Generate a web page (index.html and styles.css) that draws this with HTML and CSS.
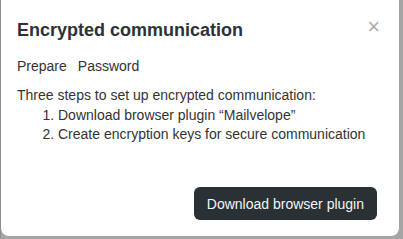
FILE: index.html
```html
<!DOCTYPE html>
<html>
<head>
<meta charset="utf-8">
<link rel="stylesheet" href="styles.css">
</head>
<body>
<div class="backdrop">
  <div class="modal">
    <div class="modal-header">
      <h2 class="title">Encrypted communication</h2>
      <span class="close">&times;</span>
    </div>
    <div class="tabs">
      <span class="tab">Prepare</span>
      <span class="tab">Password</span>
    </div>
    <div class="body">
      <p class="intro">Three steps to set up encrypted communication:</p>
      <ol class="steps">
        <li>Download browser plugin “Mailvelope”</li>
        <li>Create encryption keys for secure communication</li>
      </ol>
    </div>
    <div class="footer">
      <button class="btn">Download browser plugin</button>
    </div>
  </div>
</div>
</body>
</html>
```
FILE: styles.css
```css
html, body {
  margin: 0;
  padding: 0;
  width: 403px;
  height: 239px;
  overflow: hidden;
  background: #9a9a9a;
}
.backdrop {
  width: 403px;
  height: 239px;
  padding: 0 4px 3px 1px;
  box-sizing: border-box;
  display: flex;
  flex-direction: column;
  justify-content: flex-end;
  background: linear-gradient(to right, #8f8f8f 0, #8f8f8f 1px, #a5a5a5 1px);
}
.modal {
  height: 244px;
  flex-shrink: 0;
  background: #fff;
  border-radius: 8px;
  display: flex;
  flex-direction: column;
  font-family: "Liberation Sans", Arial, sans-serif;
  color: #333;
  box-sizing: border-box;
  padding: 0 0 16px 16px;
}
.modal-header {
  display: flex;
  align-items: center;
  justify-content: space-between;
  padding: 26px 19px 0 0;
}
.title {
  margin: 0;
  font-size: 18px;
  font-weight: bold;
  color: #2c3237;
  line-height: 24px;
}
.close {
  color: #adadad;
  font-size: 22px;
  line-height: 20px;
  font-weight: 300;
  margin-top: -6px;
}
.tabs {
  display: flex;
  gap: 11px;
  margin-top: 14px;
  font-size: 14px;
  line-height: 20px;
}
.body {
  margin-top: 10px;
  font-size: 14px;
  line-height: 19.5px;
}
.intro {
  margin: 0;
}
.steps {
  margin: 0;
  padding-left: 41px;
}
.footer {
  margin-top: auto;
  display: flex;
  justify-content: flex-end;
  padding-right: 22px;
}
.btn {
  background: #293135;
  color: #f4f4f4;
  border: none;
  border-radius: 6px;
  font-family: "Liberation Sans", Arial, sans-serif;
  font-size: 14px;
  height: 33px;
  padding: 0 13px;
}
```
